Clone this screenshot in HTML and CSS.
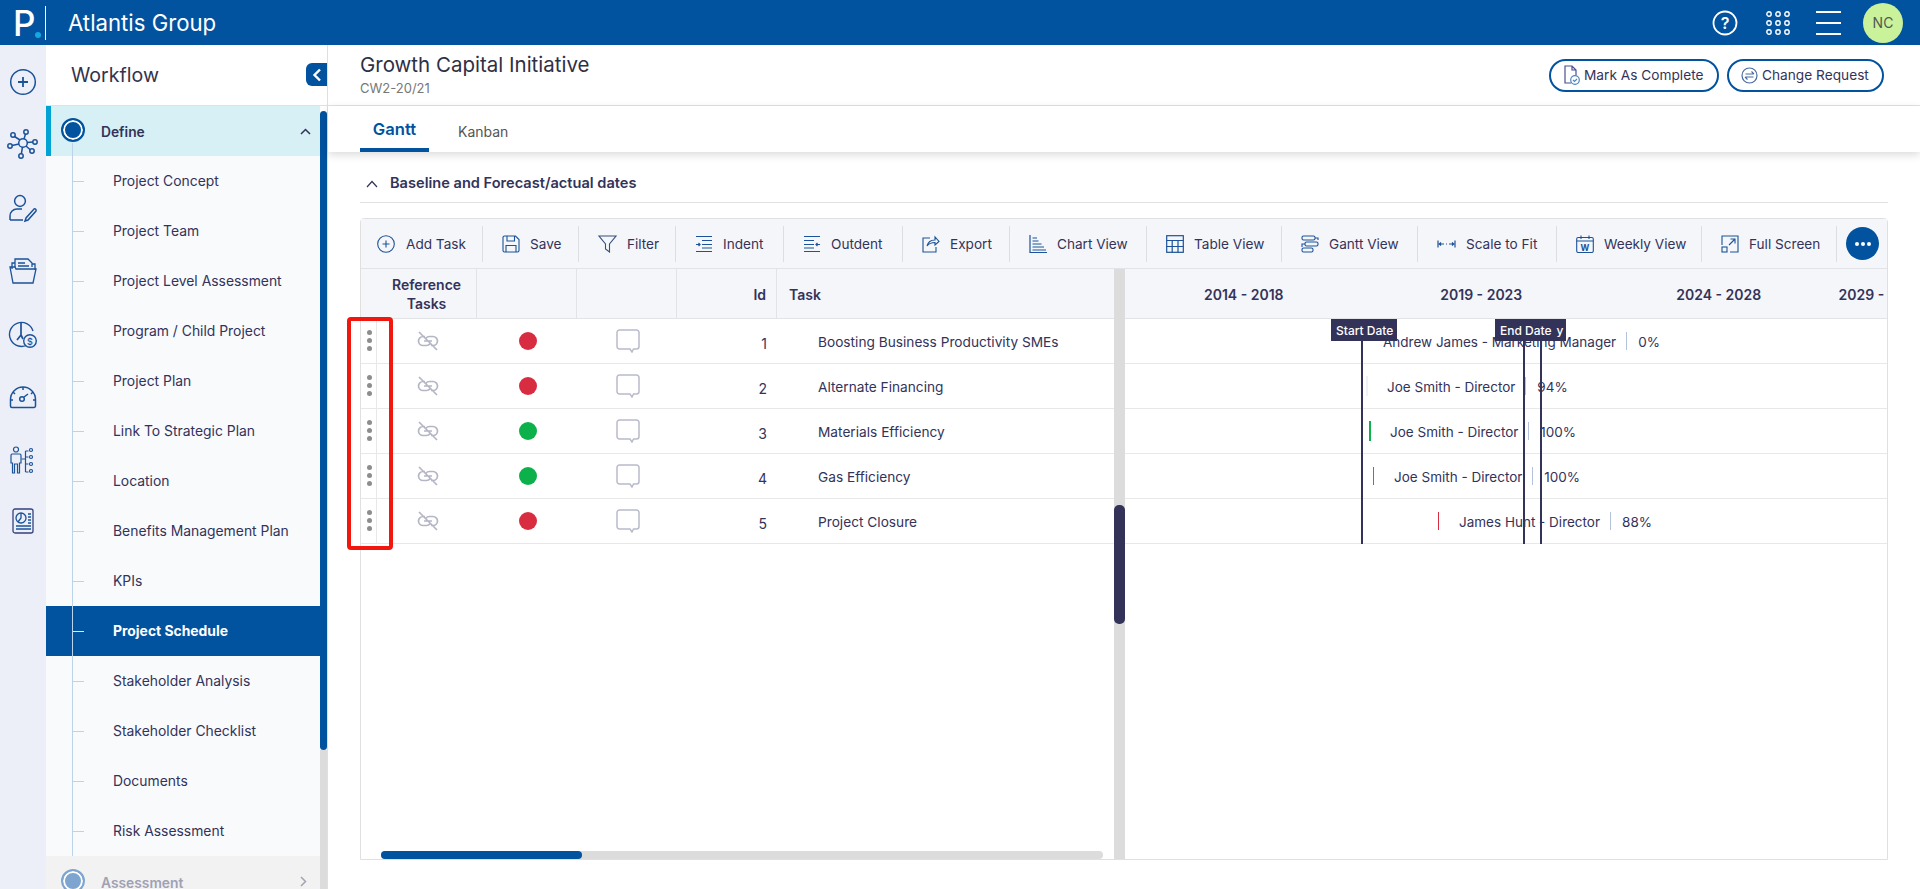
FILE: index.html
```html
<!DOCTYPE html>
<html lang="en">
<head>
<meta charset="utf-8">
<title>Growth Capital Initiative</title>
<link rel="stylesheet" href="styles.css">
</head>
<body>
<svg class="defs" width="0" height="0" aria-hidden="true">
  <symbol id="i-link" viewBox="0 0 22 22">
    <path d="M8 6.500H6a4.500 4.500 0 0 0 0 9h3.500a4.500 4.500 0 0 0 3.600-1.800M14 15.500h2a4.500 4.500 0 0 0 0-9h-3.500a4.500 4.500 0 0 0-3.600 1.800M7 11h8M2 2l18 18" fill="none" stroke="#b4b6c6" stroke-width="1.700"/>
  </symbol>
  <symbol id="i-comment" viewBox="0 0 24 24">
    <path d="M3.500 1h17A2.500 2.500 0 0 1 23 3.500v14a2.500 2.500 0 0 1-2.500 2.500h-3l-1.500 3-2-3H3.500A2.500 2.500 0 0 1 1 17.500v-14A2.500 2.500 0 0 1 3.500 1z" fill="#fff" stroke="#b9bbcb" stroke-width="1.500"/>
  </symbol>
</svg>

<header class="topbar">
  <div class="logo"><span class="logo-p">P</span><span class="logo-dot"></span></div>
  <div class="brand">Atlantis Group</div>
  <div class="top-actions">
    <svg class="ti-help" width="26" height="26" viewBox="0 0 26 26"><circle cx="13" cy="13" r="11.500" fill="none" stroke="#fff" stroke-width="1.800"/><text x="13" y="18.500" text-anchor="middle" class="help-q">?</text></svg>
    <svg class="ti-grid" width="24" height="24" viewBox="0 0 24 24" fill="none" stroke="#fff" stroke-width="1.400"><circle cx="3" cy="3" r="2.200"/><circle cx="12" cy="3" r="2.200"/><circle cx="21" cy="3" r="2.200"/><circle cx="3" cy="12" r="2.200"/><circle cx="12" cy="12" r="2.200"/><circle cx="21" cy="12" r="2.200"/><circle cx="3" cy="21" r="2.200"/><circle cx="12" cy="21" r="2.200"/><circle cx="21" cy="21" r="2.200"/></svg>
    <svg class="ti-menu" width="25" height="24" viewBox="0 0 25 24" stroke="#fff" stroke-width="2"><path d="M0 1h25M0 12h25M0 23h25"/></svg>
    <div class="avatar">NC</div>
  </div>
</header>

<div class="app">
  <nav class="rail">
    <div class="rail-item"><svg width="28" height="28" viewBox="0 0 28 28" fill="none" stroke="#1b5299" stroke-width="1.500"><circle cx="14" cy="14" r="12.300"/><path d="M14 9v10M9 14h10" stroke-width="1.800"/></svg></div>
    <div class="rail-item"><svg class="up2" width="32" height="32" viewBox="0 0 32 32" fill="none" stroke="#1b5299" stroke-width="1.500"><circle cx="16" cy="16" r="4.300"/><circle cx="6" cy="8" r="2.200"/><circle cx="19" cy="5" r="2.200"/><circle cx="28" cy="15" r="2.200"/><circle cx="25" cy="24" r="2.200"/><circle cx="14" cy="29" r="2.200"/><circle cx="3" cy="19" r="2.200"/><path d="M13 13L7.500 9.500M17 12L18.500 7M20 15.500L26 15M19 19L23.500 23M15.500 20L14.300 27M12 17L5 18.500"/></svg></div>
    <div class="rail-item"><svg width="30" height="30" viewBox="0 0 30 30" fill="none" stroke="#1b5299" stroke-width="1.500"><circle cx="12" cy="8" r="5.400"/><path d="M2 27v-4a7 7 0 0 1 7-7h5M2 27h13"/><path d="M18 25l-1 3 3-1 8-9a1.500 1.500 0 0 0-2-2z"/></svg></div>
    <div class="rail-item"><svg width="28" height="26" viewBox="0 0 28 26" fill="none" stroke="#1b5299" stroke-width="1.300"><path d="M3 11V5h3M6 9V1h13l4 4v4M23 6h3v6"/><path d="M9 5h7M9 8h11"/><path d="M1 9h5l1 2h20l-3 14H4z"/></svg></div>
    <div class="rail-item"><svg width="30" height="30" viewBox="0 0 30 30" fill="none" stroke="#1b5299" stroke-width="1.400"><path d="M20 25.500A12 12 0 1 1 25 12"/><path d="M13 4v12l-4 5M13 16l2 4" stroke-width="1.700"/><circle cx="22" cy="22" r="6.300" fill="#eceff7"/><text x="22" y="25.500" text-anchor="middle" class="rail-dollar">$</text></svg></div>
    <div class="rail-item"><svg width="28" height="24" viewBox="0 0 28 24" fill="none" stroke="#1b5299" stroke-width="1.500"><path d="M3 22.500h22a1.500 1.500 0 0 0 1.500-1.500V14.500a12.500 12.500 0 0 0-25 0V21A1.500 1.500 0 0 0 3 22.500z"/><circle cx="13" cy="14" r="2.300"/><path d="M15 12l4-3M14 2v3M4 7l2 2M24 7l-2 2M2 15h2M26 15h-2"/></svg></div>
    <div class="rail-item"><svg width="26" height="28" viewBox="0 0 26 28" fill="none" stroke="#1b5299" stroke-width="1.200"><circle cx="6" cy="3.500" r="2.500"/><path d="M2 8h8a1.500 1.500 0 0 1 1 1.500v7.500H9.500v10h-2V18h-3v9h-2V17H1V9.500A1.500 1.500 0 0 1 2 8z"/><path d="M11.500 13h4M15.500 5v21M15.500 5h3M15.500 11h3M15.500 18h3M15.500 26h3"/><circle cx="21" cy="4" r="1.500"/><circle cx="21" cy="11" r="1.500"/><circle cx="21" cy="18" r="1.500"/><circle cx="21" cy="25" r="1.500"/></svg></div>
    <div class="rail-item"><svg class="up2" width="22" height="26" viewBox="0 0 22 26" fill="none" stroke="#1b5299" stroke-width="1.300"><rect x="1" y="1" width="20" height="24" rx="2" stroke="#35427f"/><circle cx="9" cy="10" r="5"/><path d="M9 5v5l-3 4M16 6h3M16 9h3M16 12h3M16 15h3M4 18h15M4 21h15"/></svg></div>
  </nav>

  <aside class="sidebar">
    <div class="side-head">
      <h2 class="side-title">Workflow</h2>
      <button class="collapse" aria-label="Collapse"><svg width="10" height="14" viewBox="0 0 10 14" fill="none" stroke="#fff" stroke-width="2.400"><path d="M8 1.500L2.500 7L8 12.500"/></svg></button>
    </div>
    <div class="side-body">
      <div class="side-list">
        <div class="stage stage-on">
          <span class="stage-dot"></span>
          <span class="stage-name">Define</span>
          <svg class="stage-chev" width="11" height="7" viewBox="0 0 11 7" fill="none" stroke="#33335a" stroke-width="1.500"><path d="M1 6l4.500-4.500L10 6"/></svg>
        </div>
        <a class="item">Project Concept</a>
        <a class="item">Project Team</a>
        <a class="item">Project Level Assessment</a>
        <a class="item">Program / Child Project</a>
        <a class="item">Project Plan</a>
        <a class="item">Link To Strategic Plan</a>
        <a class="item">Location</a>
        <a class="item">Benefits Management Plan</a>
        <a class="item">KPIs</a>
        <a class="item item-on">Project Schedule</a>
        <a class="item">Stakeholder Analysis</a>
        <a class="item">Stakeholder Checklist</a>
        <a class="item">Documents</a>
        <a class="item">Risk Assessment</a>
        <div class="stage stage-off">
          <span class="stage-dot"></span>
          <span class="stage-name">Assessment</span>
          <svg class="stage-chev" width="7" height="11" viewBox="0 0 7 11" fill="none" stroke="#a3a4b3" stroke-width="1.500"><path d="M1 1l4.500 4.500L1 10"/></svg>
        </div>
      </div>
      <div class="side-scroll"><div class="side-thumb"></div><div class="side-track"></div></div>
    </div>
  </aside>

  <main class="main">
    <div class="page-head">
      <div class="page-titles">
        <h1 class="page-title">Growth Capital Initiative</h1>
        <div class="page-code">CW2-20/21</div>
      </div>
      <div class="page-btns">
        <button class="pill pill-mark"><svg width="17" height="20" viewBox="0 0 17 20" fill="none" stroke="#4a4f8f" stroke-width="1.200"><path d="M8 18H2V1h7l4 4v5M9 1v4h4"/><circle cx="12" cy="15" r="4.300" stroke="#4b86bd"/><path d="M10 15l1.500 1.500L14 14" stroke="#4b86bd"/></svg>Mark As Complete</button>
        <button class="pill pill-change"><svg width="17" height="17" viewBox="0 0 17 17" fill="none" stroke="#4a6a9f" stroke-width="1.200"><circle cx="8.500" cy="8.500" r="7.500"/><path d="M4.500 7h8M10.500 4.500L13 7M12.500 10h-8M6.500 12.500L4 10"/></svg>Change Request</button>
      </div>
    </div>
    <div class="tabs">
      <a class="tab tab-on">Gantt</a>
      <a class="tab">Kanban</a>
    </div>
    <div class="content">
      <div class="section-head">
        <svg width="12" height="8" viewBox="0 0 12 8" fill="none" stroke="#33335a" stroke-width="1.200"><path d="M1 7l5-5.500L11 7"/></svg>
        <span>Baseline and Forecast/actual dates</span>
      </div>

      <div class="panel">
        <div class="toolbar">
          <button class="tool tool-first"><svg width="18" height="18" viewBox="0 0 18 18" fill="none" stroke="#1b5299" stroke-width="1.100"><circle cx="9" cy="9" r="8.300"/><path d="M9 5.500v7M5.500 9h7"/></svg>Add Task</button>
          <button class="tool"><svg width="18" height="18" viewBox="0 0 18 18" fill="none" stroke="#1b5299" stroke-width="1.100"><path d="M2.500 1h11l3.500 3.500V15.500a1.500 1.500 0 0 1-1.500 1.500h-13A1.500 1.500 0 0 1 1 15.500v-13A1.500 1.500 0 0 1 2.500 1z"/><path d="M5 1v5h7.500V1M4 17v-6.500h10V17"/></svg>Save</button>
          <button class="tool"><svg width="19" height="18" viewBox="0 0 19 18" fill="none" stroke="#1b5299" stroke-width="1.100"><path d="M1 1h17l-6.500 8v8l-4-3V9z" stroke="#33507f"/></svg>Filter</button>
          <button class="tool"><svg width="18" height="18" viewBox="0 0 18 18" fill="none" stroke="#1b5299" stroke-width="1.200"><path d="M1 1.500h16M7 5.500h10M7 9.500h10M7 13h10M1 16.500h16"/><path d="M1 9.500h3.500M3.500 8L5 9.500 3.500 11"/></svg>Indent</button>
          <button class="tool"><svg width="18" height="18" viewBox="0 0 18 18" fill="none" stroke="#1b5299" stroke-width="1.200"><path d="M1 1.500h16M1 5.500h10M1 9.500h10M1 13h10M1 16.500h16"/><path d="M17 9.500h-3.500M14.500 8L13 9.500l1.500 1.500"/></svg>Outdent</button>
          <button class="tool"><svg width="18" height="18" viewBox="0 0 18 18" fill="none" stroke="#1b5299" stroke-width="1.100"><path d="M8 3H1v14h13v-5"/><path d="M5 11c1-4 4-6 8-6V2l4 4.500L13 10V7.500C10 7.500 7 8.500 5 11z"/></svg>Export</button>
          <button class="tool"><svg width="18" height="18" viewBox="0 0 18 18" fill="none" stroke="#1b5299" stroke-width="1.200"><path d="M1 0v17.500h17"/><path d="M3.500 3H8M3.500 6h6M3.500 9h9M3.500 12h11.500M3.500 15h13.500"/></svg>Chart View</button>
          <button class="tool"><svg width="18" height="18" viewBox="0 0 18 18" fill="none" stroke="#1b5299" stroke-width="1.200"><rect x="0.700" y="0.700" width="16.600" height="16.600"/><path d="M0.700 5.500h16.600M0.700 11.500h16.600M6.200 5.500v12M12 5.500v12"/></svg>Table View</button>
          <button class="tool"><svg width="18" height="18" viewBox="0 0 18 18" fill="none" stroke="#1b5299" stroke-width="1.100"><rect x="1" y="1" width="13" height="4" rx="1.500"/><rect x="4" y="7" width="13" height="4" rx="1.500"/><rect x="1" y="13" width="11" height="4" rx="1.500"/><path d="M14 3h3v2M4 9H1v3"/></svg>Gantt View</button>
          <button class="tool"><svg width="19" height="18" viewBox="0 0 19 18" fill="none" stroke="#1b5299" stroke-width="1.200"><path d="M1 5.500v7M18 5.500v7M2 9h5M4 7.500L2.300 9 4 10.500M9 9h1M12 9h5M15 7.500L16.700 9 15 10.500"/></svg>Scale to Fit</button>
          <button class="tool"><svg width="18" height="18" viewBox="0 0 18 18" fill="none" stroke="#1b5299" stroke-width="1.100"><rect x="0.700" y="2.500" width="16.600" height="15" rx="1.500"/><path d="M0.700 6h16.600M5 0.500V4M13 0.500V4"/><text x="9" y="15.500" text-anchor="middle" class="week-w">W</text></svg>Weekly View</button>
          <button class="tool"><svg width="18" height="18" viewBox="0 0 18 18" fill="none" stroke="#1b5299" stroke-width="1.100"><path d="M1 10V1h16v16H9"/><rect x="1" y="12" width="5" height="5"/><path d="M8 10l6-6M9.500 4H14v4.500"/></svg>Full Screen</button>
          <div class="tool-more"><button class="more" aria-label="More"><svg width="16" height="4" viewBox="0 0 16 4" fill="#fff"><circle cx="2" cy="2" r="2"/><circle cx="8" cy="2" r="2"/><circle cx="14" cy="2" r="2"/></svg></button></div>
        </div>

        <div class="panel-body">
          <section class="grid-pane">
            <div class="grid-head">
              <div class="gh gh-center">Reference<br>Tasks</div>
              <div class="gh"></div>
              <div class="gh"></div>
              <div class="gh gh-id">Id</div>
              <div class="gh gh-task">Task</div>
            </div>
            <div class="grow">
              <div class="row-menu"><span></span><span></span><span></span></div>
              <div class="cell cell-link"><svg width="22" height="22"><use href="#i-link"/></svg></div>
              <div class="cell"><span class="status status-red"></span></div>
              <div class="cell cell-note"><svg width="24" height="24"><use href="#i-comment"/></svg></div>
              <div class="cell cell-id">1</div>
              <div class="cell cell-task">Boosting Business Productivity SMEs</div>
            </div>
            <div class="grow">
              <div class="row-menu"><span></span><span></span><span></span></div>
              <div class="cell cell-link"><svg width="22" height="22"><use href="#i-link"/></svg></div>
              <div class="cell"><span class="status status-red"></span></div>
              <div class="cell cell-note"><svg width="24" height="24"><use href="#i-comment"/></svg></div>
              <div class="cell cell-id">2</div>
              <div class="cell cell-task">Alternate Financing</div>
            </div>
            <div class="grow">
              <div class="row-menu"><span></span><span></span><span></span></div>
              <div class="cell cell-link"><svg width="22" height="22"><use href="#i-link"/></svg></div>
              <div class="cell"><span class="status status-green"></span></div>
              <div class="cell cell-note"><svg width="24" height="24"><use href="#i-comment"/></svg></div>
              <div class="cell cell-id">3</div>
              <div class="cell cell-task">Materials Efficiency</div>
            </div>
            <div class="grow">
              <div class="row-menu"><span></span><span></span><span></span></div>
              <div class="cell cell-link"><svg width="22" height="22"><use href="#i-link"/></svg></div>
              <div class="cell"><span class="status status-green"></span></div>
              <div class="cell cell-note"><svg width="24" height="24"><use href="#i-comment"/></svg></div>
              <div class="cell cell-id">4</div>
              <div class="cell cell-task">Gas Efficiency</div>
            </div>
            <div class="grow">
              <div class="row-menu"><span></span><span></span><span></span></div>
              <div class="cell cell-link"><svg width="22" height="22"><use href="#i-link"/></svg></div>
              <div class="cell"><span class="status status-red"></span></div>
              <div class="cell cell-note"><svg width="24" height="24"><use href="#i-comment"/></svg></div>
              <div class="cell cell-id">5</div>
              <div class="cell cell-task">Project Closure</div>
            </div>
            <div class="hscroll"><div class="hthumb"></div></div>
            <div class="highlight"></div>
          </section>

          <div class="splitter"><div class="split-thumb"></div></div>

          <section class="chart">
            <div class="chart-head">
              <div class="yr">2014 - 2018</div>
              <div class="yr">2019 - 2023</div>
              <div class="yr">2024 - 2028</div>
              <div class="yr yr-last">2029 - 2033</div>
            </div>
            <div class="chart-rows">
              <div class="crow" style="padding-left:258px"><span class="who">Andrew James - Marketing Manager</span><span class="sep"></span><span class="pct">0%</span></div>
              <div class="crow" style="padding-left:241px"><span class="bar bar-pale"></span><span class="who">Joe Smith - Director</span><span class="sep"></span><span class="pct">94%</span></div>
              <div class="crow" style="padding-left:244px"><span class="bar bar-green"></span><span class="who">Joe Smith - Director</span><span class="sep"></span><span class="pct">100%</span></div>
              <div class="crow" style="padding-left:248px"><span class="bar bar-green bar-thin"></span><span class="who">Joe Smith - Director</span><span class="sep"></span><span class="pct">100%</span></div>
              <div class="crow" style="padding-left:313px"><span class="bar bar-red bar-thin"></span><span class="who">James Hunt - Director</span><span class="sep"></span><span class="pct">88%</span></div>
              <div class="mk-line mk-a"></div>
              <div class="mk-line mk-b"></div>
              <div class="mk-line mk-c"></div>
              <div class="mk-label mk-start">Start Date</div>
              <div class="mk-label mk-end">End Date<span class="mk-y">y</span></div>
            </div>
          </section>
        </div>
      </div>
    </div>
  </main>
</div>
</body>
</html>
```

FILE: styles.css
```css
* { box-sizing: border-box; }
html, body { height: 100%; }
body {
  margin: 0;
  height: 100vh;
  overflow: hidden;
  display: flex;
  flex-direction: column;
  font-family: Inter, "Liberation Sans", sans-serif;
  font-size: 14px;
  color: #33335a;
  background: #fff;
}
button { font: inherit; color: inherit; background: none; border: 0; padding: 0; }
.defs { position: absolute; }

/* top bar */
.topbar {
  height: 45px;
  flex: none;
  background: #01529f;
  display: flex;
  align-items: center;
  color: #fff;
}
.logo {
  width: 46px;
  height: 34px;
  padding-left: 13px;
  border-right: 1px solid #fff;
  display: flex;
  align-items: flex-end;
}
.logo-p { font-size: 35px; line-height: 34px; font-weight: 500; height: 34px; margin-top: -4px; }
.logo-dot { width: 6px; height: 6px; border-radius: 50%; background: #13a8e0; margin: 0 0 2px 0; flex: none; }
.brand { margin-left: 22px; font-size: 22.200px; padding-bottom: 1px; }
.top-actions { margin-left: auto; display: flex; align-items: center; padding-right: 17px; }
.ti-help { margin-right: 28px; }
.ti-grid { margin-right: 26px; }
.ti-menu { margin-right: 22px; }
.help-q { font: 600 16px Inter, sans-serif; fill: #fff; }
.avatar {
  width: 40px; height: 40px; border-radius: 50%;
  background: #c9f29b; color: #4f5a4f;
  display: flex; align-items: center; justify-content: center;
  font-size: 14px;
}

.app { flex: 1; min-height: 0; display: flex; }

/* icon rail */
.rail { width: 46px; flex: none; background: #eceff7; padding-top: 5px; }
.rail-item { height: 63px; display: flex; align-items: center; justify-content: center; }
.up2 { margin-top: -4px; }
.rail-dollar { font: 500 9px Inter, sans-serif; fill: #1b5299; stroke: none; }

/* sidebar */
.sidebar {
  width: 282px; flex: none;
  display: flex; flex-direction: column;
  border-right: 1px solid #dfdfdf;
  background: #fff;
  min-height: 0;
  position: relative;
}
.side-head {
  height: 61px; flex: none;
  padding-left: 25px;
  display: flex; align-items: center;
  border-bottom: 1px solid #e2e2e2;
}
.side-title { margin: 0; font-size: 19.600px; font-weight: 400; color: #33334a; padding-bottom: 1px; }
.collapse {
  position: absolute; right: 0; top: 18px;
  width: 21px; height: 23px;
  background: #01529f;
  border-radius: 6px 0 0 6px;
  display: flex; align-items: center; justify-content: center;
}
.side-body { flex: 1; min-height: 0; display: flex; }
.side-list { width: 274px; flex: none; overflow: hidden; background: #f8fafc; }
.side-scroll { width: 7px; flex: none; display: flex; flex-direction: column; }
.side-thumb { height: 639px; margin-top: 5px; background: #01529f; border-radius: 4px; flex: none; }
.side-track { flex: 1; background: #dcdcdc; }

.stage {
  height: 50px; position: relative;
  display: flex; align-items: center;
  padding: 1px 0 0 55px;
  font-weight: 600;
  font-size: 13.800px;
}
.stage-on { background: #d6f0f6; box-shadow: inset 5px 0 0 #00a3d4; }
.stage-on::after {
  content: ""; position: absolute; left: 26px; top: 37px; bottom: 0;
  width: 1px; background: #bcd4ea;
}
.stage-off { background: #f2f2f2; color: #a0a1b4; }
.stage-dot {
  position: absolute; left: 15px; top: 12px;
  width: 24px; height: 24px; border-radius: 50%;
  background: #01529f;
  border: 2px solid #01529f;
  box-shadow: inset 0 0 0 2px #fff;
}
.stage-off .stage-dot {
  background: #7ea5cf; border-color: #7ea5cf;
  top: 13px;
}
.stage-off .stage-name { margin-top: 2px; }
.stage-chev { position: absolute; left: 254px; top: 22px; }
.stage-off .stage-chev { left: 254px; top: 20px; }

.item {
  display: flex; align-items: center;
  height: 50px;
  padding-left: 67px;
  position: relative;
  color: #33335a;
  font-size: 13.900px;
}
.item::before {
  content: ""; position: absolute; left: 26px; top: 0; bottom: 0;
  width: 1px; background: #bcd4ea;
}
.item::after {
  content: ""; position: absolute; left: 27px; top: 25px;
  width: 11px; height: 1px; background: #bcd4ea;
}
.item-on { background: #01529f; color: #fff; font-weight: 700; margin-right: -7px; z-index: 1; }
.item-on::after { background: #dfeaf5; }

/* main */
.main { flex: 1; min-width: 0; display: flex; flex-direction: column; }
.page-head {
  height: 61px; flex: none;
  display: flex; justify-content: space-between; align-items: flex-start;
  padding: 7px 36px 0 32px;
  border-bottom: 1px solid #e2e2e2;
}
.page-title { margin: 0; font-size: 20.500px; font-weight: 400; line-height: 26px; color: #2f2f45; }
.page-code { font-size: 13px; line-height: 16px; color: #777; margin-top: 2px; }
.page-btns { display: flex; gap: 8px; margin-top: 7px; }
.pill {
  height: 33px;
  border: 2px solid #01529f;
  border-radius: 17px;
  display: flex; align-items: center; gap: 4px;
  background: #fff;
  padding: 0 0 1px 12px;
  white-space: nowrap;
  font-size: 13.700px;
}
.pill-mark { width: 170px; }
.pill-change { width: 157px; }

.tabs {
  height: 46px; flex: none;
  padding-left: 32px;
  display: flex;
  background: #fff;
  box-shadow: 0 3px 8px rgba(0,0,0,.14);
  position: relative;
}
.tab { height: 46px; display: flex; align-items: center; justify-content: center; color: #555; padding-top: 4px; }
.tab:nth-child(2) { margin-left: 29px; }
.tab-on {
  width: 69px;
  color: #01529f; font-size: 16.600px; font-weight: 600;
  border-bottom: 4px solid #01529f;
  padding-top: 4px;
}

.content { flex: 1; min-height: 0; padding: 0 32px 29px; display: flex; flex-direction: column; }
.section-head {
  height: 51px; flex: none;
  display: flex; align-items: center; gap: 12px;
  padding: 12px 0 0 6px;
  border-bottom: 1px solid #e2e2e2;
  font-weight: 600;
  font-size: 14.600px;
  margin-bottom: 15px;
}
.section-head svg { margin-top: 2px; }

/* panel */
.panel {
  flex: 1; min-height: 0;
  border: 1px solid #e0e0e0;
  border-radius: 4px 4px 0 0;
  display: flex; flex-direction: column;
}
.toolbar {
  height: 50px; flex: none;
  background: #f5f6f9;
  border-bottom: 1px solid #e2e3e6;
  display: grid;
  grid-template-columns: 122px 96px 97px 108px 119px 107px 137px 135px 136px 139px 145px 135px 1fr;
  align-items: center;
}
.tool {
  height: 36px;
  display: flex; align-items: center; gap: 10px;
  padding: 0 0 0 19px;
  border-right: 1px solid #dcdee2;
  white-space: nowrap;
  text-align: left;
  font-size: 13.600px;
  line-height: 14px;
}
.tool-first { padding-left: 16px; gap: 11px; }
.tool svg { flex: none; margin-top: 0; }
.week-w { font: 700 8.500px Inter, sans-serif; fill: #1b5299; stroke: none; }
.tool-more { display: flex; padding-left: 9px; }
.more {
  width: 33px; height: 33px; border-radius: 50%;
  background: #01529f;
  display: flex; align-items: center; justify-content: center;
}

.panel-body { flex: 1; min-height: 0; display: flex; }
.grid-pane { width: 753px; flex: none; display: flex; flex-direction: column; position: relative; }
.grid-head {
  height: 50px; flex: none;
  display: grid;
  grid-template-columns: 116px 100px 100px 100px 1fr;
  background: #f5f6f9;
  border-bottom: 1px solid #e2e3e6;
}
.gh {
  border-right: 1px solid #e2e3e6;
  font-weight: 600;
  display: flex; align-items: center;
  line-height: 19px;
  padding-top: 1px;
}
.gh:last-child { border-right: 0; }
.gh-center { justify-content: center; text-align: center; padding-left: 16px; }
.gh-id { justify-content: flex-end; padding-right: 10px; padding-top: 2px; }
.gh-task { padding-left: 12px; padding-top: 2px; }
.grow {
  height: 45px; flex: none;
  display: grid;
  grid-template-columns: 16px 100px 100px 100px 100px 1fr;
  border-bottom: 1px solid #e8e8e8;
  align-items: stretch;
}
.row-menu {
  border-right: 1px solid #e8e8e8;
  display: flex; flex-direction: column; align-items: center; justify-content: center; gap: 3px;
  padding: 0 0 2px 1px;
}
.row-menu span { width: 5px; height: 5px; border-radius: 50%; background: #8d8d8d; }
.cell { display: flex; align-items: center; justify-content: center; }
.cell-link { padding-left: 2px; }
.cell-note { padding-left: 2px; }
.cell-id { justify-content: flex-end; padding: 4px 10px 0 0; }
.cell-task { justify-content: flex-start; padding: 2px 0 0 41px; white-space: nowrap; font-size: 13.700px; }
.status { width: 18px; height: 18px; border-radius: 50%; margin-right: -2px; }
.status-red { background: #d82c41; }
.status-green { background: #0db14b; }
.hscroll {
  margin: auto 11px 0 20px;
  height: 8px;
  background: #dcdcdc;
  border-radius: 4px;
  flex: none;
}
.hthumb { width: 201px; height: 8px; background: #01529f; border-radius: 4px; }
.highlight {
  position: absolute; left: -14px; top: 48px;
  width: 46px; height: 233px;
  border: 4px solid #f2170e;
  border-radius: 4px;
  pointer-events: none;
}

.splitter { width: 11px; flex: none; background: #dcdcdc; padding-top: 236px; }
.split-thumb { height: 119px; background: #33335a; border-radius: 5px; }

.chart { flex: 1; min-width: 0; display: flex; flex-direction: column; overflow: hidden; }
.chart-head {
  height: 50px; flex: none;
  background: #f5f6f9;
  border-bottom: 1px solid #e2e3e6;
  display: flex; align-items: center;
  padding-top: 2px;
  font-weight: 600;
  white-space: nowrap;
}
.yr { width: 237.500px; flex: none; text-align: center; }
.yr-last { text-align: left; padding-left: 1px; }
.chart-rows { position: relative; }
.crow {
  height: 45px;
  display: flex; align-items: center;
  border-bottom: 1px solid #e8e8e8;
  white-space: nowrap;
  font-size: 13.500px;
}
.who, .pct { padding-top: 2px; }
.who { margin-right: 10px; }
.sep { width: 1px; height: 18px; background: #b3c3de; margin-right: 11px; flex: none; }
.bar { width: 2px; height: 20px; margin-right: 19px; flex: none; }
.bar-thin { width: 1px; height: 18px; margin-right: 20px; }
.bar-pale { background: #edf2f8; }
.bar-green { background: #0db14b; }
.bar-red { background: #d82c41; }
.mk-line { position: absolute; top: 0; bottom: 0; width: 2px; background: #33335a; }
.mk-a { left: 236px; }
.mk-b { left: 398px; }
.mk-c { left: 415px; }
.mk-label {
  position: absolute; top: 0;
  height: 22px;
  background: #33335a; color: #fff;
  font-size: 12px; font-weight: 500;
  display: flex; align-items: center;
  padding-left: 5px;
  white-space: nowrap;
}
.mk-start { left: 206px; width: 66px; }
.mk-end { left: 370px; width: 71px; }
.mk-y { margin-left: 5px; }
```
